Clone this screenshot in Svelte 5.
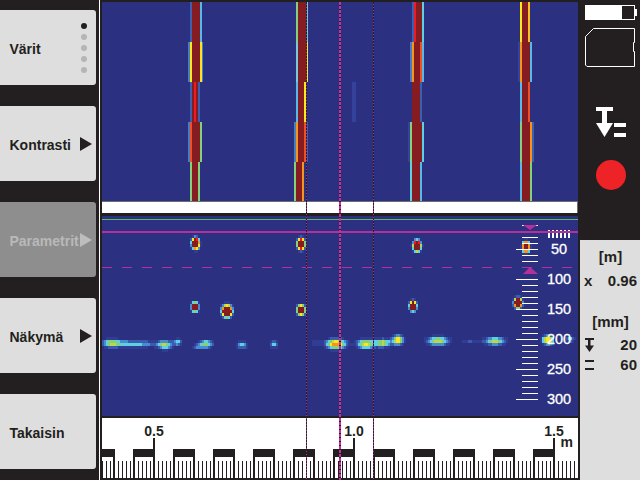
<script>
	const menu = [
		{ label: 'Värit', marker: 'dots' },
		{ label: 'Kontrasti', marker: 'arrow' },
		{ label: 'Parametrit', marker: 'arrow', disabled: true },
		{ label: 'Näkymä', marker: 'arrow' },
		{ label: 'Takaisin' }
	];

	const blue = '#3d5fae';
	const sky = '#58b8e8';
	const cyan = '#5fd0e0';
	const green = '#86d07c';
	const yellow = '#fbe81c';
	const orange = '#f7941d';
	const flame = '#f04e23';
	const red = '#ed1c24';
	const core = '#841c22';
	const deep = '#34429c';

	// each row of a band: [x, width, colour], 40px high, from y=2
	const bands = [
		[
			[[190, 2, blue], [192, 8, core], [200, 2, sky]],
			[[188, 2, '#4a7cc4'], [190, 2, yellow], [192, 8, core], [200, 2, yellow], [202, 1, '#4a7cc4']],
			[[190, 2, blue], [192, 2, core], [194, 2, red], [196, 2, core], [198, 2, blue]],
			[[188, 2, '#4a7cc4'], [190, 2, flame], [192, 8, core], [200, 2, green]],
			[[190, 2, green], [192, 6, core], [198, 2, green]]
		],
		[
			[[296, 2, green], [298, 8, core], [306, 2, cyan]],
			[[296, 2, '#7cc8d8'], [298, 8, core], [306, 2, yellow]],
			[[296, 2, sky], [298, 6, core], [304, 2, yellow]],
			[[294, 2, '#4a7cc4'], [296, 2, orange], [298, 6, core], [304, 2, flame], [306, 2, blue]],
			[[294, 2, green], [296, 6, core], [302, 2, orange]]
		],
		[
			[[412, 2, blue], [414, 2, red], [416, 6, core], [422, 2, cyan]],
			[[410, 2, '#4a7cc4'], [412, 2, orange], [414, 6, core], [420, 2, flame], [422, 2, sky]],
			[[412, 8, core], [420, 2, blue]],
			[[408, 2, deep], [410, 2, green], [412, 10, core], [422, 2, cyan]],
			[[410, 2, cyan], [412, 8, core], [420, 2, sky]]
		],
		[
			[[520, 2, yellow], [522, 6, core], [528, 2, '#fbc01c']],
			[[518, 2, deep], [520, 2, orange], [522, 8, core], [530, 2, sky]],
			[[520, 2, sky], [522, 6, core], [528, 2, flame]],
			[[520, 2, green], [522, 8, core], [530, 2, orange], [532, 2, blue]],
			[[520, 2, sky], [522, 8, core], [530, 2, green]]
		]
	];

	const scanRects = [{ x: 352, y: 82, w: 4, fill: deep }];
	bands.forEach((rows) =>
		rows.forEach((row, i) =>
			row.forEach(([x, w, fill]) => scanRects.push({ x, y: 2 + i * 40, w, fill }))
		)
	);

	// [cx, cy, sx, sy, peak]
	const blobs = [
		[195.5, 243.5, 3.2, 4.5, 2.4],
		[195, 307, 3, 3.8, 1.9],
		[227, 311, 4, 4.6, 2.8],
		[301, 244, 3.2, 4.5, 2.4],
		[301, 310, 3.2, 4, 2.3],
		[417, 246, 3.2, 4.5, 2.4],
		[413, 306, 3, 4, 2.2],
		[518, 303, 3.2, 4.2, 2.4],
		[526, 247, 3, 4.4, 2.3],
		[195, 259, 1.8, 2.4, 0.1],
		[111, 343, 8, 3.8, 0.46],
		[128, 344, 16, 3.4, 0.33],
		[147, 344, 11, 3.2, 0.16],
		[165, 345, 7, 4.2, 0.5],
		[178, 342, 4, 3.4, 0.32],
		[206, 344, 6.5, 3.8, 0.46],
		[198, 347, 5, 3, 0.22],
		[242, 345, 5, 3.6, 0.32],
		[274, 344, 4, 3.8, 0.32],
		[315, 343, 6, 3, 0.12],
		[336, 344, 9, 4.6, 0.78],
		[366, 344, 8.5, 4.4, 0.6],
		[383, 343, 7.5, 3.8, 0.54],
		[398, 340, 5.5, 4.4, 0.66],
		[438, 341, 10, 4.2, 0.55],
		[470, 342, 10, 3, 0.14],
		[495, 341, 10, 3.8, 0.5],
		[548, 340, 5.5, 4.2, 0.74],
		[570, 339, 4.5, 3, 0.32]
	];

	const ramp = [
		[0.95, core],
		[0.8, red],
		[0.68, orange],
		[0.55, yellow],
		[0.47, '#b8d850'],
		[0.38, green],
		[0.28, cyan],
		[0.2, '#4a8cd0'],
		[0.13, '#3a5cae'],
		[0.07, '#313c94']
	];

	const heat = [];
	for (let y = 217; y < 416; y += 3) {
		for (let x = 102; x < 578; x += 2) {
			let v = 0;
			for (const [cx, cy, sx, sy, p] of blobs) {
				const dx = (x + 1 - cx) / sx;
				const dy = (y + 1.5 - cy) / sy;
				v += p * Math.exp(-dx * dx - dy * dy);
			}
			const step = ramp.find((r) => v >= r[0]);
			if (step) heat.push({ x, y, fill: step[1] });
		}
	}

	const depthTicks = [];
	for (let y = 225; y <= 399; y += 6) {
		if (y !== 231 && y !== 267 && y !== 273) depthTicks.push({ y, long: (y - 219) % 30 === 0 && y > 231 });
	}
	const depthLabels = [50, 100, 150, 200, 250, 300];
	const comb = [0, 1, 2, 3, 4, 5].map((i) => 548 + i * 4);
	const dashes = Array.from({ length: 24 }, (_, i) => 102 + i * 20);

	const cells = Array.from({ length: 24 }, (_, i) => 114 + i * 20 - 40);
	const minor = [];
	for (let x = 102; x < 578; x += 4) minor.push(x);
	const metres = [
		{ x: 154, t: '0.5' },
		{ x: 354, t: '1.0' },
		{ x: 554, t: '1.5' }
	];
</script>

<div class="screen">
	<nav class="menu">
		{#each menu as item}
			<button class="item" class:disabled={item.disabled}>
				<span>{item.label}</span>
				{#if item.marker === 'dots'}
					<span class="dots">
						<i class="on"></i><i></i><i></i><i></i><i></i>
					</span>
				{:else if item.marker === 'arrow'}
					<span class="arrow"></span>
				{/if}
			</button>
		{/each}
	</nav>

	<main class="view">
		<svg class="scan" width="476" height="199" viewBox="102 2 476 199">
			<rect x="102" y="2" width="476" height="199" fill="#2b3080" />
			{#each scanRects as r}
				<rect x={r.x} y={r.y} width={r.w} height={r.y === 162 ? 39 : 40} fill={r.fill} />
			{/each}
		</svg>
		<div class="strip"></div>
		<svg class="depth" width="476" height="200" viewBox="102 216 476 200">
			<rect x="102" y="216" width="476" height="200" fill="#2b3080" />
			<rect x="102" y="219" width="476" height="1" fill="#62b85c" />
			{#each heat as c}
				<rect x={c.x} y={c.y} width="2" height="3" fill={c.fill} />
			{/each}
			{#each comb as x}
				<rect {x} y="230" width="2" height="8" fill="#fff" />
			{/each}
			<rect x="102" y="231" width="476" height="2" fill="#b5309a" />
			{#each dashes as x}
				<rect {x} y="267" width="10" height="1" fill="#b5309a" />
			{/each}
			{#each depthTicks as t}
				<rect x={t.long ? 516 : 522} y={t.y} width={t.long ? 22 : 16} height="1" fill="#fff" />
			{/each}
			<polygon points="523,225 537,225 530,230" fill="#b5309a" />
			<polygon points="530,267 523,274 538,274" fill="#b5309a" />
			{#each depthLabels as d, i}
				<text class="num" x="559" y={254 + i * 30} text-anchor="middle">{d}</text>
			{/each}
		</svg>
		<svg class="ruler" width="478" height="64" viewBox="100 416 478 64">
			<rect x="100" y="416" width="478" height="64" fill="#231f20" />
			<rect x="102" y="418" width="476" height="60" fill="#fff" />
			{#each cells as x, i}
				{#if i % 2 === 0}
					<rect x={x + 20} y="449" width="20" height="8" fill="#231f20" />
				{/if}
				<rect x={x - 1} y="449" width="2" height="29" fill="#231f20" />
			{/each}
			<rect x="102" y="449" width="12" height="8" fill="#231f20" />
			{#each minor as x}
				<rect {x} y="461" width="1" height="17" fill="#231f20" />
			{/each}
			{#each metres as m}
				<rect x={m.x - 1} y="438" width="2" height="40" fill="#231f20" />
				<text class="metre" x={m.x} y="436" text-anchor="middle">{m.t}</text>
			{/each}
			<text class="metre" x="566.7" y="447" text-anchor="middle">m</text>
		</svg>
		<div class="cursor c1"></div>
		<div class="cursor c2"></div>
		<div class="cursor c3"></div>
	</main>

	<aside class="side">
		<div class="status">
			<svg width="60" height="240" viewBox="580 0 60 240">
				<rect x="585.5" y="5.5" width="49" height="14" fill="none" stroke="#fff" />
				<rect x="585" y="5" width="37" height="15" fill="#fff" />
				<rect x="635" y="9" width="2" height="7" fill="#fff" />
				<path
					d="M593.5 28.5H634.5V42.5H633.5V51.5H634.5V66.5H587L585.5 65V36.5Z"
					fill="none"
					stroke="#fff"
				/>
				<rect x="596" y="107" width="17" height="4" fill="#fff" />
				<rect x="602" y="111" width="5" height="13" fill="#fff" />
				<polygon points="596,123 613,123 604.5,137" fill="#fff" />
				<rect x="614" y="123" width="12" height="4" fill="#fff" />
				<rect x="614" y="133" width="12" height="4" fill="#fff" />
				<circle cx="611" cy="175" r="15" fill="#ee2328" />
			</svg>
		</div>
		<div class="readout">
			<div class="unit">[m]</div>
			<div class="row x">
				<span>x</span><span>0.96</span>
			</div>
			<div class="unit second">[mm]</div>
			<div class="row cover">
				<svg width="9" height="14" viewBox="0 0 9 14">
					<rect x="0" y="0" width="9" height="2" fill="#231f20" />
					<rect x="3" y="2" width="2.5" height="6" fill="#231f20" />
					<polygon points="0,7.5 9,7.5 4.5,14" fill="#231f20" />
				</svg>
				<span>20</span>
			</div>
			<div class="row">
				<svg width="9" height="10" viewBox="0 0 9 10">
					<rect x="0" y="0" width="9" height="2" fill="#231f20" />
					<rect x="0" y="8" width="9" height="2" fill="#231f20" />
				</svg>
				<span>60</span>
			</div>
		</div>
	</aside>
</div>

<style>
	:global(body) {
		margin: 0;
		background: #231f20;
	}
	.screen {
		display: flex;
		width: 640px;
		height: 480px;
		overflow: hidden;
		background: #231f20;
		font-family: 'Liberation Sans', Arial, sans-serif;
		color: #231f20;
	}
	.menu {
		display: flex;
		flex-direction: column;
		gap: 21px;
		box-sizing: border-box;
		width: 100px;
		padding: 10px 3px 0 0;
		border-right: 1px solid #fff;
	}
	.item {
		display: flex;
		align-items: center;
		justify-content: space-between;
		flex: none;
		height: 75px;
		padding: 2px 4px 0 9.5px;
		border: 0;
		border-radius: 0 3px 3px 0;
		background: #dedede;
		color: #231f20;
		font: bold 14px 'Liberation Sans', Arial, sans-serif;
		text-align: left;
	}
	.item.disabled {
		background: #8f8e8e;
		color: #b9b9b9;
	}
	.dots {
		display: flex;
		flex-direction: column;
		gap: 5px;
		margin: -2px 5px 0 0;
	}
	.dots i {
		display: block;
		width: 6px;
		height: 6px;
		border-radius: 50%;
		background: #b5b5b5;
	}
	.dots i.on {
		background: #231f20;
	}
	.arrow {
		width: 0;
		height: 0;
		margin-top: -2px;
		border-left: 12px solid #231f20;
		border-top: 7px solid transparent;
		border-bottom: 7px solid transparent;
	}
	.disabled .arrow {
		border-left-color: #bdbdbd;
	}
	.view {
		position: relative;
		display: flex;
		flex-direction: column;
		box-sizing: border-box;
		width: 480px;
		padding: 2px 2px 0 2px;
	}
	.view svg {
		display: block;
		flex: none;
	}
	.strip {
		flex: none;
		height: 11px;
		margin-bottom: 3px;
		border-top: 1px solid #6d6d6d;
		border-right: 1px solid #6d6d6d;
		background: #fff;
	}
	.ruler {
		margin-left: -2px;
	}
	.num {
		font-size: 14.5px;
		fill: #fff;
		stroke: #fff;
		stroke-width: 0.3px;
	}
	.metre {
		font-size: 14px;
		font-weight: bold;
		fill: #231f20;
	}
	.cursor {
		position: absolute;
		top: 2px;
		bottom: 0;
		width: 1px;
		background: repeating-linear-gradient(#231f20 0 2px, #b5309a 2px 3px);
	}
	.c1 {
		left: 206px;
	}
	.c2 {
		left: 239px;
		width: 2px;
		background: repeating-linear-gradient(#c4309e 0 3px, #231f20 3px 4px);
	}
	.c3 {
		left: 273px;
	}
	.side {
		display: flex;
		flex-direction: column;
		width: 60px;
	}
	.status {
		flex: none;
		height: 240px;
	}
	.status svg {
		display: block;
	}
	.readout {
		flex: 1;
		box-sizing: border-box;
		padding: 8px 3px 0 4px;
		background: #dedede;
		font-size: 15px;
		font-weight: bold;
	}
	.unit {
		height: 17px;
		text-align: center;
		line-height: 17px;
	}
	.unit.second {
		margin-top: 24px;
	}
	.row {
		display: flex;
		align-items: center;
		justify-content: space-between;
		height: 17px;
		margin-top: 3px;
		line-height: 17px;
	}
	.row.x {
		margin-top: 7px;
	}
	.row.cover {
		margin-top: 6px;
	}
	.row svg {
		display: block;
		margin-left: 1px;
	}
</style>
